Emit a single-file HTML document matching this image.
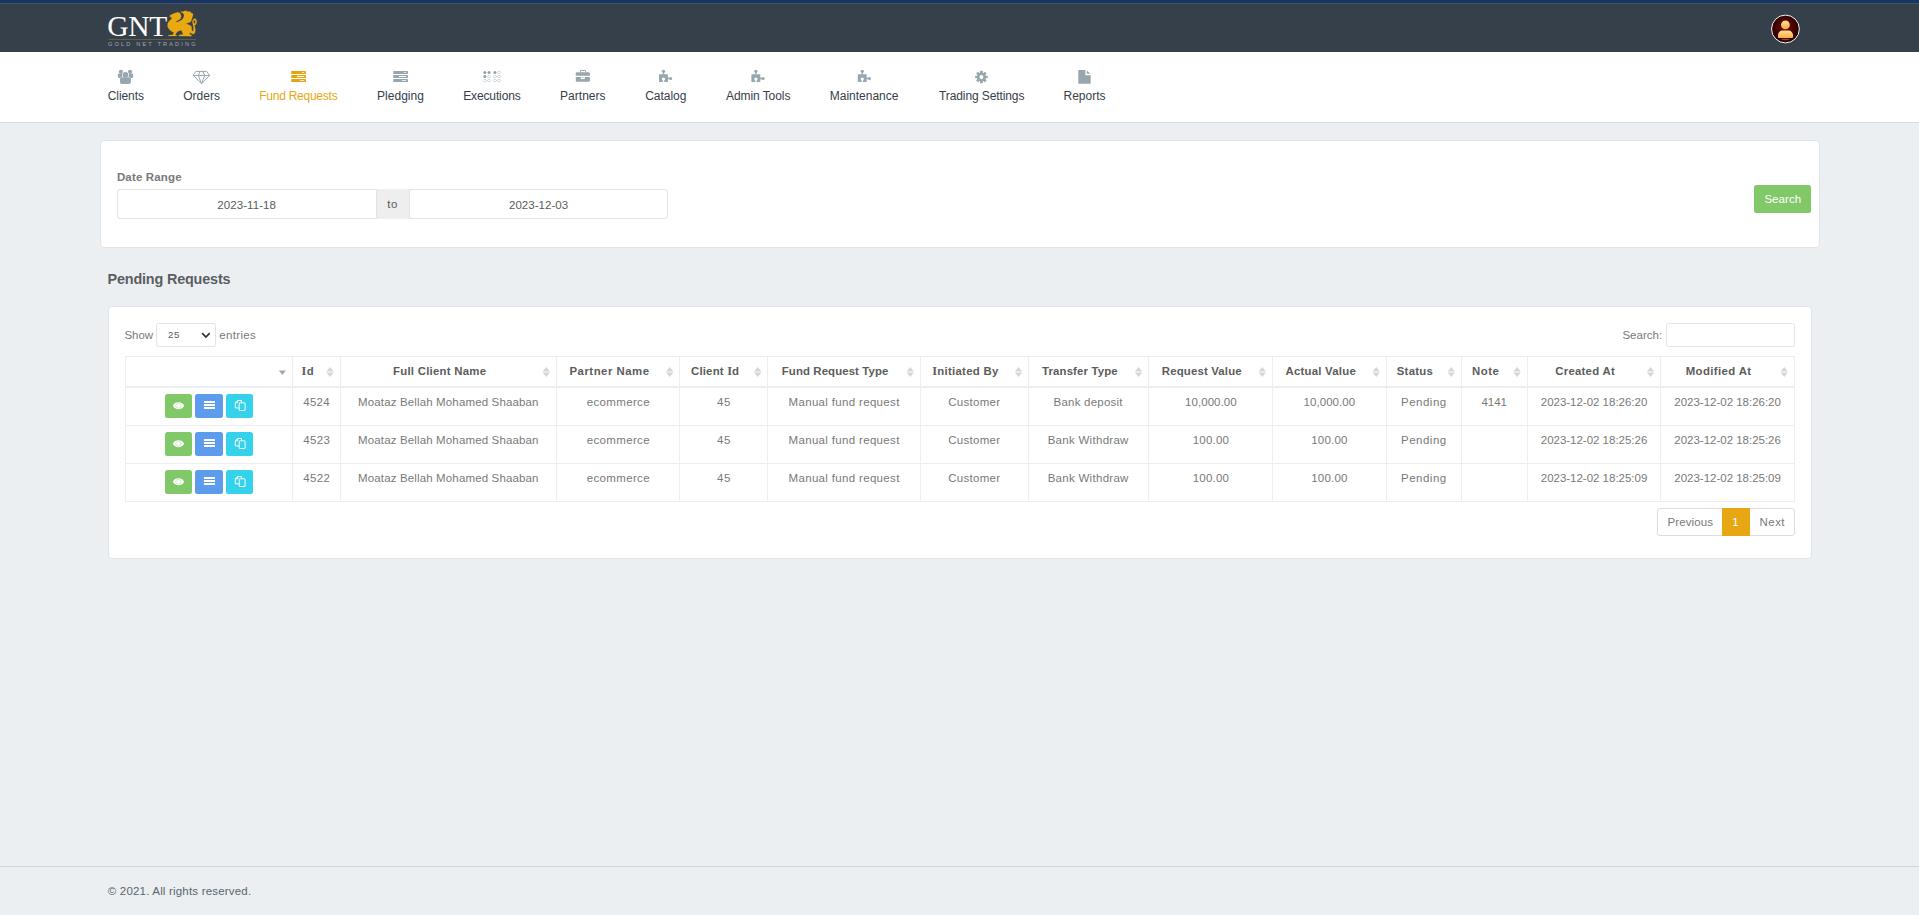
<!DOCTYPE html>
<html lang="en"><head><meta charset="utf-8"><title>Fund Requests</title>
<style>
*{box-sizing:border-box;margin:0;padding:0}
html,body{width:1919px;height:915px;overflow:hidden}
body{background:#ebeff2;font-family:"Liberation Sans",sans-serif;position:relative;color:#797979}
.a{position:absolute}
.t{position:absolute;white-space:nowrap;line-height:20px;font-family:"Liberation Sans",sans-serif}
.strip{left:0;top:0;width:1919px;height:4px;background:#19355e;border-bottom:1px solid #3b5276}
.topbar{left:0;top:4px;width:1919px;height:48px;background:#36404a}
.nav{left:0;top:52px;width:1919px;height:71px;background:#fff;border-bottom:1px solid #d6dade}
.card{background:#fff;border:1px solid #e0e4e9;border-radius:4px}
.inp{background:#fff;border:1px solid #e3e3e3}
.vl{position:absolute;width:1px;background:#ebeff2;top:356px;height:146px}
.hl{position:absolute;left:125px;width:1670px;height:1px;background:#ebeff2}
.btn{position:absolute;height:24px;border-radius:3px}
svg{position:absolute;overflow:visible}
</style></head><body>
<div class="a strip"></div>
<div class="a topbar"></div>
<div class="a nav"></div>
<!-- filter card -->
<div class="a card" style="left:100px;top:140px;width:1720px;height:108px"></div>
<div class="a inp" style="left:117px;top:189px;width:260px;height:30px;border-radius:3px 0 0 3px"></div>
<div class="a" style="left:377px;top:189px;width:32px;height:30px;background:#eeeeee;border-top:1px solid #eeeeee;border-bottom:1px solid #eeeeee"></div>
<div class="a inp" style="left:409px;top:189px;width:259px;height:30px;border-radius:0 3px 3px 0"></div>
<div class="a" style="left:1754px;top:185px;width:57px;height:28px;background:#81c868;border-radius:2.5px"></div>
<!-- table card -->
<div class="a card" style="left:108px;top:306px;width:1704px;height:253px"></div>
<div class="a inp" style="left:156px;top:323px;width:60px;height:24px;border-radius:2.5px"></div>
<div class="a inp" style="left:1666px;top:323px;width:129px;height:24px;border-radius:2.5px"></div>
<!-- table grid -->
<div class="hl" style="top:356px"></div>
<div class="hl" style="top:386px;height:2px"></div>
<div class="hl" style="top:425px"></div>
<div class="hl" style="top:463px"></div>
<div class="hl" style="top:501px"></div>
<div class="vl" style="left:125px"></div><div class="vl" style="left:292px"></div><div class="vl" style="left:340px"></div>
<div class="vl" style="left:556px"></div><div class="vl" style="left:679px"></div><div class="vl" style="left:767px"></div>
<div class="vl" style="left:920px"></div><div class="vl" style="left:1028px"></div><div class="vl" style="left:1148px"></div>
<div class="vl" style="left:1272px"></div><div class="vl" style="left:1386px"></div><div class="vl" style="left:1461px"></div>
<div class="vl" style="left:1527px"></div><div class="vl" style="left:1660px"></div><div class="vl" style="left:1794px"></div>
<!-- pagination -->
<div class="a" style="left:1657px;top:508px;width:138px;height:28px;background:#fff;border:1px solid #dddddd;border-radius:3px"></div>
<div class="a" style="left:1722px;top:508px;width:28px;height:28px;background:#e6a712"></div>
<!-- footer -->
<div class="a" style="left:0;top:866px;width:1919px;height:1px;background:#d4d7da"></div>

<svg width="1919" height="915" viewBox="0 0 1919 915" style="left:0;top:0">
<defs>
<radialGradient id="av" cx="50%" cy="45%" r="55%"><stop offset="0" stop-color="#7a0c02"/><stop offset="0.55" stop-color="#470400"/><stop offset="1" stop-color="#230100"/></radialGradient>
<linearGradient id="avg" x1="0" y1="0" x2="0" y2="1"><stop offset="0" stop-color="#ffe08f"/><stop offset="1" stop-color="#f5a94a"/></linearGradient>
</defs>
<path d="M169.20,16.29 L170.32,15.18 L172.54,13.88 L175.14,12.95 L177.74,12.32 L179.60,12.77 L180.53,14.07 L181.27,16.11 L180.90,17.97 L179.60,19.45 L177.37,20.75 L176.07,21.49 L176.82,22.24 L179.60,21.12 L182.20,19.45 L183.69,17.22 L184.06,14.99 L182.95,13.14 L180.34,11.84 L183.32,11.46 L185.92,10.54 L187.77,11.65 L189.63,11.28 L191.12,12.77 L193.16,13.88 L192.79,15.74 L192.23,17.59 L191.67,19.45 L190.93,21.68 L188.52,22.79 L185.92,23.83 L188.89,24.65 L191.41,26.32 L191.71,28.37 L191.86,30.78 L193.27,31.15 L193.49,27.25 L192.75,23.91 L192.31,21.31 L193.35,19.08 L195.20,18.52 L196.69,20.19 L196.69,22.79 L195.58,25.02 L194.27,25.21 L193.72,23.91 L195.02,23.17 L195.39,21.31 L194.65,20.01 L193.72,20.38 L193.61,22.05 L194.61,25.77 L195.39,29.48 L195.20,32.45 L193.53,34.24 L191.49,33.57 L190.00,32.45 L189.63,33.94 L191.86,35.54 L191.49,36.17 L178.86,36.06 L178.67,35.05 L183.32,34.31 L182.20,32.45 L181.46,30.22 L178.86,30.97 L177.00,32.08 L175.33,34.87 L176.82,35.42 L176.63,36.06 L168.27,36.06 L168.27,35.35 L172.92,34.87 L173.84,32.45 L171.43,31.34 L168.83,29.11 L167.53,26.51 L167.71,23.54 L169.20,20.94 L171.43,19.08 L171.99,17.78 L170.32,17.41 L171.06,16.67Z" fill="#e8a912" stroke="#e8a912" stroke-width="0.15" stroke-linejoin="round"/>
<rect x="108.5" y="39" width="87.5" height="1" fill="#665c40"/>
<circle cx="1785.45" cy="29" r="13.9" fill="url(#av)" stroke="#f4f4f4" stroke-width="1.0"/>
<circle cx="1785.4" cy="24.9" r="4.4" fill="url(#avg)"/>
<path d="M1778,37.2 v-2.2 a4.4,4.4 0 0 1 4.4,-4.4 h6.2 a4.4,4.4 0 0 1 4.4,4.4 v2.2 a0.8,0.8 0 0 1 -0.8,0.8 h-13.4 a0.8,0.8 0 0 1 -0.8,-0.8 z" fill="url(#avg)"/>
<ellipse cx="1785.4" cy="39.5" rx="4" ry="0.8" fill="#b86a10" opacity="0.7"/>
<g fill="#98a6ad"><circle cx="120.95" cy="71.85" r="2.1"/><circle cx="130.05" cy="71.85" r="2.1"/><rect x="117.85" y="73.6" width="4.6" height="4.3" rx="1.1"/><rect x="128.55" y="73.6" width="4.6" height="4.3" rx="1.1"/><circle cx="125.45" cy="74.8" r="3.15" fill="#fff"/><rect x="119.7" y="77.15" width="11.5" height="7.0" rx="2.1" fill="#fff"/><circle cx="125.45" cy="74.8" r="2.8"/><rect x="120.0" y="77.35" width="10.9" height="6.55" rx="1.9"/></g>
<g fill="none" stroke="#98a6ad" stroke-width="1.0" stroke-linejoin="round" stroke-linecap="round">
<path d="M196.34,71.41 L206.67,71.41 L209.68,75.50 L201.50,83.67 L193.33,75.50 Z"/>
<path d="M193.33,75.50 L209.68,75.50"/>
<path d="M199.94,71.41 L198.38,75.50 L201.50,83.67 L204.63,75.50 L203.07,71.41"/>
</g>
<g transform="translate(0,0)"><g fill="#e6a50e"><rect x="291.2" y="71.05" width="14.8" height="2.85" rx="0.4"/><rect x="291.2" y="75.1" width="14.8" height="2.85" rx="0.4"/><rect x="291.2" y="79.1" width="14.8" height="2.85" rx="0.4"/></g><g fill="#fff"><rect x="301.75" y="72.1" width="2.55" height="0.75" rx="0.35"/><rect x="296.8" y="76.1" width="7.5" height="0.8" rx="0.35"/><rect x="299.8" y="80.15" width="4.5" height="0.8" rx="0.35"/></g></g>
<g transform="translate(102,0)"><g fill="#98a6ad"><rect x="291.2" y="71.05" width="14.8" height="2.85" rx="0.4"/><rect x="291.2" y="75.1" width="14.8" height="2.85" rx="0.4"/><rect x="291.2" y="79.1" width="14.8" height="2.85" rx="0.4"/></g><g fill="#fff"><rect x="301.75" y="72.1" width="2.55" height="0.75" rx="0.35"/><rect x="296.8" y="76.1" width="7.5" height="0.8" rx="0.35"/><rect x="299.8" y="80.15" width="4.5" height="0.8" rx="0.35"/></g></g>
<circle cx="484.8" cy="72.44" r="1.5" fill="#93a2aa"/>
<circle cx="489.0" cy="72.44" r="1.5" fill="#93a2aa"/>
<circle cx="494.9" cy="72.44" r="1.5" fill="#93a2aa"/>
<ellipse cx="499.0" cy="72.44" rx="1.55" ry="1.15" fill="none" stroke="#c3ccd1" stroke-width="0.7"/>
<rect x="486.1" y="72.14" width="1.6" height="0.6" fill="#ccd3d8"/>
<rect x="496.2" y="72.14" width="1.6" height="0.6" fill="#ccd3d8"/>
<circle cx="484.8" cy="76.5" r="1.5" fill="#93a2aa"/>
<ellipse cx="489.0" cy="76.5" rx="1.55" ry="1.15" fill="none" stroke="#c3ccd1" stroke-width="0.7"/>
<ellipse cx="494.9" cy="76.5" rx="1.55" ry="1.15" fill="none" stroke="#c3ccd1" stroke-width="0.7"/>
<ellipse cx="499.0" cy="76.5" rx="1.55" ry="1.15" fill="none" stroke="#c3ccd1" stroke-width="0.7"/>
<rect x="486.1" y="76.2" width="1.6" height="0.6" fill="#ccd3d8"/>
<rect x="496.2" y="76.2" width="1.6" height="0.6" fill="#ccd3d8"/>
<ellipse cx="484.8" cy="80.54" rx="1.55" ry="1.15" fill="none" stroke="#c3ccd1" stroke-width="0.7"/>
<ellipse cx="489.0" cy="80.54" rx="1.55" ry="1.15" fill="none" stroke="#c3ccd1" stroke-width="0.7"/>
<ellipse cx="494.9" cy="80.54" rx="1.55" ry="1.15" fill="none" stroke="#c3ccd1" stroke-width="0.7"/>
<ellipse cx="499.0" cy="80.54" rx="1.55" ry="1.15" fill="none" stroke="#c3ccd1" stroke-width="0.7"/>
<rect x="486.1" y="80.24000000000001" width="1.6" height="0.6" fill="#ccd3d8"/>
<rect x="496.2" y="80.24000000000001" width="1.6" height="0.6" fill="#ccd3d8"/>
<g fill="#98a6ad">
<path d="M575.8,75.85 v-2.6 a1,1 0 0 1 1,-1 h12.1 a1,1 0 0 1 1,1 v2.6 z"/>
<path d="M575.8,77.05 h14.1 v3.8 a1,1 0 0 1 -1,1 h-12.1 a1,1 0 0 1 -1,-1 z"/>
<path d="M580.4,72.4 v-1.4 a0.6,0.6 0 0 1 0.6,-0.6 h4 a0.6,0.6 0 0 1 0.6,0.6 v1.4" fill="none" stroke="#98a6ad" stroke-width="1"/>
<rect x="580.85" y="77.05" width="3.95" height="2.0" fill="#fff"/>
<rect x="582.0" y="77.2" width="1.7" height="0.6"/>
</g>
<g transform="translate(0,0)" fill="#98a6ad"><rect x="659.0" y="74.15" width="8.9" height="7.75" rx="0.3"/><circle cx="663.5" cy="71.3" r="1.6"/><rect x="662.8" y="72.3" width="1.4" height="2.2"/><circle cx="670.7" cy="78.45" r="1.5"/><rect x="667.5" y="77.6" width="2.4" height="1.7"/><circle cx="663.5" cy="79.1" r="1.65" fill="#fff"/><rect x="662.85" y="80.2" width="1.3" height="2" fill="#fff"/></g>
<g transform="translate(92.4,0)" fill="#98a6ad"><rect x="659.0" y="74.15" width="8.9" height="7.75" rx="0.3"/><circle cx="663.5" cy="71.3" r="1.6"/><rect x="662.8" y="72.3" width="1.4" height="2.2"/><circle cx="670.7" cy="78.45" r="1.5"/><rect x="667.5" y="77.6" width="2.4" height="1.7"/><circle cx="663.5" cy="79.1" r="1.65" fill="#fff"/><rect x="662.85" y="80.2" width="1.3" height="2" fill="#fff"/></g>
<g transform="translate(198.8,0)" fill="#98a6ad"><rect x="659.0" y="74.15" width="8.9" height="7.75" rx="0.3"/><circle cx="663.5" cy="71.3" r="1.6"/><rect x="662.8" y="72.3" width="1.4" height="2.2"/><circle cx="670.7" cy="78.45" r="1.5"/><rect x="667.5" y="77.6" width="2.4" height="1.7"/><circle cx="663.5" cy="79.1" r="1.65" fill="#fff"/><rect x="662.85" y="80.2" width="1.3" height="2" fill="#fff"/></g>
<g fill="#98a6ad"><circle cx="981.4" cy="77.0" r="4.5"/><rect x="980.05" y="70.8" width="2.7" height="3" rx="0.5" transform="rotate(0 981.4 77.0)"/><rect x="980.05" y="70.8" width="2.7" height="3" rx="0.5" transform="rotate(45 981.4 77.0)"/><rect x="980.05" y="70.8" width="2.7" height="3" rx="0.5" transform="rotate(90 981.4 77.0)"/><rect x="980.05" y="70.8" width="2.7" height="3" rx="0.5" transform="rotate(135 981.4 77.0)"/><rect x="980.05" y="70.8" width="2.7" height="3" rx="0.5" transform="rotate(180 981.4 77.0)"/><rect x="980.05" y="70.8" width="2.7" height="3" rx="0.5" transform="rotate(225 981.4 77.0)"/><rect x="980.05" y="70.8" width="2.7" height="3" rx="0.5" transform="rotate(270 981.4 77.0)"/><rect x="980.05" y="70.8" width="2.7" height="3" rx="0.5" transform="rotate(315 981.4 77.0)"/><circle cx="981.4" cy="77.0" r="2.0" fill="#fff"/></g>
<path d="M1078.3,70.1 H1085.4 V75.2 H1090.7 V83.8 H1078.3 Z" fill="#98a6ad"/>
<path d="M1086.8,70.6 L1090.4,73.8 H1086.8 Z" fill="#98a6ad"/>
<path d="M326.40,371.55 L330.05,367.0 L333.70,371.55 Z" fill="#d6d6d6"/><path d="M326.40,372.6 L330.05,377.1 L333.70,372.6 Z" fill="#d6d6d6"/>
<path d="M542.60,371.55 L546.25,367.0 L549.90,371.55 Z" fill="#d6d6d6"/><path d="M542.60,372.6 L546.25,377.1 L549.90,372.6 Z" fill="#d6d6d6"/>
<path d="M666.10,371.55 L669.75,367.0 L673.40,371.55 Z" fill="#d6d6d6"/><path d="M666.10,372.6 L669.75,377.1 L673.40,372.6 Z" fill="#d6d6d6"/>
<path d="M754.10,371.55 L757.75,367.0 L761.40,371.55 Z" fill="#d6d6d6"/><path d="M754.10,372.6 L757.75,377.1 L761.40,372.6 Z" fill="#d6d6d6"/>
<path d="M906.60,371.55 L910.25,367.0 L913.90,371.55 Z" fill="#d6d6d6"/><path d="M906.60,372.6 L910.25,377.1 L913.90,372.6 Z" fill="#d6d6d6"/>
<path d="M1014.90,371.55 L1018.55,367.0 L1022.20,371.55 Z" fill="#d6d6d6"/><path d="M1014.90,372.6 L1018.55,377.1 L1022.20,372.6 Z" fill="#d6d6d6"/>
<path d="M1134.90,371.55 L1138.55,367.0 L1142.20,371.55 Z" fill="#d6d6d6"/><path d="M1134.90,372.6 L1138.55,377.1 L1142.20,372.6 Z" fill="#d6d6d6"/>
<path d="M1258.60,371.55 L1262.25,367.0 L1265.90,371.55 Z" fill="#d6d6d6"/><path d="M1258.60,372.6 L1262.25,377.1 L1265.90,372.6 Z" fill="#d6d6d6"/>
<path d="M1372.60,371.55 L1376.25,367.0 L1379.90,371.55 Z" fill="#d6d6d6"/><path d="M1372.60,372.6 L1376.25,377.1 L1379.90,372.6 Z" fill="#d6d6d6"/>
<path d="M1447.60,371.55 L1451.25,367.0 L1454.90,371.55 Z" fill="#d6d6d6"/><path d="M1447.60,372.6 L1451.25,377.1 L1454.90,372.6 Z" fill="#d6d6d6"/>
<path d="M1513.40,371.55 L1517.05,367.0 L1520.70,371.55 Z" fill="#d6d6d6"/><path d="M1513.40,372.6 L1517.05,377.1 L1520.70,372.6 Z" fill="#d6d6d6"/>
<path d="M1646.90,371.55 L1650.55,367.0 L1654.20,371.55 Z" fill="#d6d6d6"/><path d="M1646.90,372.6 L1650.55,377.1 L1654.20,372.6 Z" fill="#d6d6d6"/>
<path d="M1780.60,371.55 L1784.25,367.0 L1787.90,371.55 Z" fill="#d6d6d6"/><path d="M1780.60,372.6 L1784.25,377.1 L1787.90,372.6 Z" fill="#d6d6d6"/>
<path d="M278.8,370.5 L285.9,370.5 L282.35,374.9 Z" fill="#a6a6a6"/>
<path d="M202.1,333.2 L205.9,337.0 L209.7,333.2" fill="none" stroke="#333" stroke-width="1.7"/>
<rect x="165" y="394" width="27" height="24" rx="2.5" fill="#81c868"/>
<rect x="195" y="394" width="28" height="24" rx="2.5" fill="#5d9cec"/>
<rect x="226" y="394" width="27" height="24" rx="2.5" fill="#34d3eb"/>
<path d="M172.9,405.7 C174.5,401.09999999999997 182.5,401.09999999999997 184.1,405.7 C182.5,410.3 174.5,410.3 172.9,405.7 Z" fill="#fff"/>
<circle cx="178.5" cy="405.7" r="2.55" fill="none" stroke="#b4dea4" stroke-width="0.6"/>
<rect x="203.9" y="401.00" width="11.1" height="2.1" rx="0.3" fill="#fff"/>
<rect x="203.9" y="404.00" width="11.1" height="2.1" rx="0.3" fill="#fff"/>
<rect x="203.9" y="407.00" width="11.1" height="2.1" rx="0.3" fill="#fff"/>
<g fill="none" stroke="#fff" stroke-width="0.95" stroke-linejoin="round"><path d="M239.2,407.9 h-3.9 v-5.2 l2.2,-2.2 h4.0 v2.3"/><path d="M237.6,400.6 v2.2 h-2.2"/><rect x="239.2" y="402.8" width="5.9" height="7.7" rx="0.5"/></g>
<rect x="165" y="432" width="27" height="24" rx="2.5" fill="#81c868"/>
<rect x="195" y="432" width="28" height="24" rx="2.5" fill="#5d9cec"/>
<rect x="226" y="432" width="27" height="24" rx="2.5" fill="#34d3eb"/>
<path d="M172.9,443.7 C174.5,439.09999999999997 182.5,439.09999999999997 184.1,443.7 C182.5,448.3 174.5,448.3 172.9,443.7 Z" fill="#fff"/>
<circle cx="178.5" cy="443.7" r="2.55" fill="none" stroke="#b4dea4" stroke-width="0.6"/>
<rect x="203.9" y="439.00" width="11.1" height="2.1" rx="0.3" fill="#fff"/>
<rect x="203.9" y="442.00" width="11.1" height="2.1" rx="0.3" fill="#fff"/>
<rect x="203.9" y="445.00" width="11.1" height="2.1" rx="0.3" fill="#fff"/>
<g fill="none" stroke="#fff" stroke-width="0.95" stroke-linejoin="round"><path d="M239.2,445.9 h-3.9 v-5.2 l2.2,-2.2 h4.0 v2.3"/><path d="M237.6,438.6 v2.2 h-2.2"/><rect x="239.2" y="440.8" width="5.9" height="7.7" rx="0.5"/></g>
<rect x="165" y="470" width="27" height="24" rx="2.5" fill="#81c868"/>
<rect x="195" y="470" width="28" height="24" rx="2.5" fill="#5d9cec"/>
<rect x="226" y="470" width="27" height="24" rx="2.5" fill="#34d3eb"/>
<path d="M172.9,481.7 C174.5,477.09999999999997 182.5,477.09999999999997 184.1,481.7 C182.5,486.3 174.5,486.3 172.9,481.7 Z" fill="#fff"/>
<circle cx="178.5" cy="481.7" r="2.55" fill="none" stroke="#b4dea4" stroke-width="0.6"/>
<rect x="203.9" y="477.00" width="11.1" height="2.1" rx="0.3" fill="#fff"/>
<rect x="203.9" y="480.00" width="11.1" height="2.1" rx="0.3" fill="#fff"/>
<rect x="203.9" y="483.00" width="11.1" height="2.1" rx="0.3" fill="#fff"/>
<g fill="none" stroke="#fff" stroke-width="0.95" stroke-linejoin="round"><path d="M239.2,483.9 h-3.9 v-5.2 l2.2,-2.2 h4.0 v2.3"/><path d="M237.6,476.6 v2.2 h-2.2"/><rect x="239.2" y="478.8" width="5.9" height="7.7" rx="0.5"/></g>
</svg>
<span class="t" style="left:107.3px;top:0;font-family:'Liberation Serif',serif;font-size:29.5px;line-height:29.5px;color:#fff;top:12.3px;letter-spacing:-0.3px">GNT</span>
<span class="t" style="left:108px;top:40.2px;font-size:5.6px;line-height:8px;color:#a3a9b0;letter-spacing:2.16px;font-weight:400">GOLD NET TRADING</span>
<span class="t" style="left:107.75px;top:85.84px;font-size:12px;color:#36404a;letter-spacing:-0.083px;">Clients</span>
<span class="t" style="left:183.25px;top:85.84px;font-size:12px;color:#36404a;">Orders</span>
<span class="t" style="left:377.00px;top:85.84px;font-size:12px;color:#36404a;letter-spacing:0.036px;">Pledging</span>
<span class="t" style="left:463.25px;top:85.84px;font-size:12px;color:#36404a;letter-spacing:-0.139px;">Executions</span>
<span class="t" style="left:560.00px;top:85.84px;font-size:12px;color:#36404a;letter-spacing:0.036px;">Partners</span>
<span class="t" style="left:645.25px;top:85.84px;font-size:12px;color:#36404a;letter-spacing:-0.042px;">Catalog</span>
<span class="t" style="left:726.00px;top:85.84px;font-size:12px;color:#36404a;letter-spacing:-0.075px;">Admin Tools</span>
<span class="t" style="left:829.75px;top:85.84px;font-size:12px;color:#36404a;">Maintenance</span>
<span class="t" style="left:939.00px;top:85.84px;font-size:12px;color:#36404a;letter-spacing:-0.100px;">Trading Settings</span>
<span class="t" style="left:1063.50px;top:85.84px;font-size:12px;color:#36404a;">Reports</span>
<span class="t" style="left:259.25px;top:85.84px;font-size:12px;color:#e6a712;letter-spacing:-0.250px;">Fund Requests</span>
<span class="t" style="left:116.92px;top:167.22px;font-size:11.5px;color:#797979;letter-spacing:0.153px;font-weight:700;">Date Range</span>
<span class="t" style="left:217.20px;top:195.02px;font-size:11.5px;color:#5a5a5a;letter-spacing:0.089px;">2023-11-18</span>
<span class="t" style="left:387.35px;top:194.32px;font-size:11.5px;color:#5a5a5a;letter-spacing:0.500px;">to</span>
<span class="t" style="left:509.00px;top:195.02px;font-size:11.5px;color:#5a5a5a;letter-spacing:0.028px;">2023-12-03</span>
<span class="t" style="left:1764.40px;top:189.22px;font-size:11.5px;color:#ffffff;letter-spacing:0.050px;">Search</span>
<span class="t" style="left:107.50px;top:268.76px;font-size:14.4px;color:#5a5e63;letter-spacing:-0.167px;font-weight:700;">Pending Requests</span>
<span class="t" style="left:124.50px;top:325.02px;font-size:11.5px;color:#797979;letter-spacing:-0.050px;">Show</span>
<span class="t" style="left:168.00px;top:324.70px;font-size:9.8px;color:#5a5a5a;letter-spacing:0.500px;">25</span>
<span class="t" style="left:219.25px;top:325.02px;font-size:11.5px;color:#797979;letter-spacing:0.333px;">entries</span>
<span class="t" style="left:1622.40px;top:325.12px;font-size:11.5px;color:#797979;letter-spacing:0.017px;">Search:</span>
<span class="t" style="left:301.38px;top:360.85px;font-size:11.4px;color:#5c5c5c;letter-spacing:0.500px;font-weight:700;"><span style="font-family:'Liberation Serif',serif;font-size:108%;line-height:1">I</span>d</span>
<span class="t" style="left:393.00px;top:360.85px;font-size:11.4px;color:#5c5c5c;letter-spacing:0.250px;font-weight:700;">Full Client Name</span>
<span class="t" style="left:569.50px;top:360.85px;font-size:11.4px;color:#5c5c5c;letter-spacing:0.500px;font-weight:700;">Partner Name</span>
<span class="t" style="left:691.00px;top:360.85px;font-size:11.4px;color:#5c5c5c;letter-spacing:0.188px;font-weight:700;">Client <span style="font-family:'Liberation Serif',serif;font-size:108%;line-height:1">I</span>d</span>
<span class="t" style="left:781.75px;top:360.85px;font-size:11.4px;color:#5c5c5c;letter-spacing:0.109px;font-weight:700;">Fund Request Type</span>
<span class="t" style="left:932.25px;top:360.85px;font-size:11.4px;color:#5c5c5c;letter-spacing:0.273px;font-weight:700;"><span style="font-family:'Liberation Serif',serif;font-size:108%;line-height:1">I</span>nitiated By</span>
<span class="t" style="left:1042.00px;top:360.85px;font-size:11.4px;color:#5c5c5c;letter-spacing:0.146px;font-weight:700;">Transfer Type</span>
<span class="t" style="left:1161.75px;top:360.85px;font-size:11.4px;color:#5c5c5c;letter-spacing:0.167px;font-weight:700;">Request Value</span>
<span class="t" style="left:1285.50px;top:360.85px;font-size:11.4px;color:#5c5c5c;letter-spacing:0.227px;font-weight:700;">Actual Value</span>
<span class="t" style="left:1396.75px;top:360.85px;font-size:11.4px;color:#5c5c5c;letter-spacing:0.250px;font-weight:700;">Status</span>
<span class="t" style="left:1472.00px;top:360.85px;font-size:11.4px;color:#5c5c5c;letter-spacing:0.500px;font-weight:700;">Note</span>
<span class="t" style="left:1555.25px;top:360.85px;font-size:11.4px;color:#5c5c5c;letter-spacing:0.250px;font-weight:700;">Created At</span>
<span class="t" style="left:1685.75px;top:360.85px;font-size:11.4px;color:#5c5c5c;letter-spacing:0.375px;font-weight:700;">Modified At</span>
<span class="t" style="left:303.27px;top:392.22px;font-size:11.5px;color:#797979;letter-spacing:0.250px;">4524</span>
<span class="t" style="left:358.02px;top:392.22px;font-size:11.5px;color:#797979;letter-spacing:0.143px;">Moataz Bellah Mohamed Shaaban</span>
<span class="t" style="left:586.73px;top:392.22px;font-size:11.5px;color:#797979;letter-spacing:0.344px;">ecommerce</span>
<span class="t" style="left:717.00px;top:392.22px;font-size:11.5px;color:#797979;letter-spacing:0.500px;">45</span>
<span class="t" style="left:788.52px;top:392.22px;font-size:11.5px;color:#797979;letter-spacing:0.333px;">Manual fund request</span>
<span class="t" style="left:948.27px;top:392.22px;font-size:11.5px;color:#797979;letter-spacing:0.286px;">Customer</span>
<span class="t" style="left:1053.50px;top:392.22px;font-size:11.5px;color:#797979;letter-spacing:0.227px;">Bank deposit</span>
<span class="t" style="left:1185.00px;top:392.22px;font-size:11.5px;color:#797979;letter-spacing:0.062px;">10,000.00</span>
<span class="t" style="left:1303.50px;top:392.22px;font-size:11.5px;color:#797979;letter-spacing:0.062px;">10,000.00</span>
<span class="t" style="left:1401.00px;top:392.22px;font-size:11.5px;color:#797979;letter-spacing:0.500px;">Pending</span>
<span class="t" style="left:1481.50px;top:392.22px;font-size:11.5px;color:#797979;letter-spacing:-0.083px;">4141</span>
<span class="t" style="left:1540.75px;top:392.22px;font-size:11.5px;color:#797979;letter-spacing:-0.014px;">2023-12-02 18:26:20</span>
<span class="t" style="left:1674.35px;top:392.22px;font-size:11.5px;color:#797979;letter-spacing:-0.014px;">2023-12-02 18:26:20</span>
<span class="t" style="left:303.27px;top:430.22px;font-size:11.5px;color:#797979;letter-spacing:0.333px;">4523</span>
<span class="t" style="left:358.02px;top:430.22px;font-size:11.5px;color:#797979;letter-spacing:0.143px;">Moataz Bellah Mohamed Shaaban</span>
<span class="t" style="left:586.73px;top:430.22px;font-size:11.5px;color:#797979;letter-spacing:0.344px;">ecommerce</span>
<span class="t" style="left:717.00px;top:430.22px;font-size:11.5px;color:#797979;letter-spacing:0.500px;">45</span>
<span class="t" style="left:788.52px;top:430.22px;font-size:11.5px;color:#797979;letter-spacing:0.333px;">Manual fund request</span>
<span class="t" style="left:948.27px;top:430.22px;font-size:11.5px;color:#797979;letter-spacing:0.286px;">Customer</span>
<span class="t" style="left:1047.65px;top:430.22px;font-size:11.5px;color:#797979;letter-spacing:0.287px;">Bank Withdraw</span>
<span class="t" style="left:1192.75px;top:430.22px;font-size:11.5px;color:#797979;letter-spacing:0.200px;">100.00</span>
<span class="t" style="left:1311.25px;top:430.22px;font-size:11.5px;color:#797979;letter-spacing:0.200px;">100.00</span>
<span class="t" style="left:1401.00px;top:430.22px;font-size:11.5px;color:#797979;letter-spacing:0.500px;">Pending</span>
<span class="t" style="left:1540.75px;top:430.22px;font-size:11.5px;color:#797979;letter-spacing:-0.014px;">2023-12-02 18:25:26</span>
<span class="t" style="left:1674.35px;top:430.22px;font-size:11.5px;color:#797979;letter-spacing:-0.014px;">2023-12-02 18:25:26</span>
<span class="t" style="left:303.27px;top:468.22px;font-size:11.5px;color:#797979;letter-spacing:0.333px;">4522</span>
<span class="t" style="left:358.02px;top:468.22px;font-size:11.5px;color:#797979;letter-spacing:0.143px;">Moataz Bellah Mohamed Shaaban</span>
<span class="t" style="left:586.73px;top:468.22px;font-size:11.5px;color:#797979;letter-spacing:0.344px;">ecommerce</span>
<span class="t" style="left:717.00px;top:468.22px;font-size:11.5px;color:#797979;letter-spacing:0.500px;">45</span>
<span class="t" style="left:788.52px;top:468.22px;font-size:11.5px;color:#797979;letter-spacing:0.333px;">Manual fund request</span>
<span class="t" style="left:948.27px;top:468.22px;font-size:11.5px;color:#797979;letter-spacing:0.286px;">Customer</span>
<span class="t" style="left:1047.65px;top:468.22px;font-size:11.5px;color:#797979;letter-spacing:0.287px;">Bank Withdraw</span>
<span class="t" style="left:1192.75px;top:468.22px;font-size:11.5px;color:#797979;letter-spacing:0.200px;">100.00</span>
<span class="t" style="left:1311.25px;top:468.22px;font-size:11.5px;color:#797979;letter-spacing:0.200px;">100.00</span>
<span class="t" style="left:1401.00px;top:468.22px;font-size:11.5px;color:#797979;letter-spacing:0.500px;">Pending</span>
<span class="t" style="left:1540.75px;top:468.22px;font-size:11.5px;color:#797979;letter-spacing:-0.014px;">2023-12-02 18:25:09</span>
<span class="t" style="left:1674.35px;top:468.22px;font-size:11.5px;color:#797979;letter-spacing:-0.014px;">2023-12-02 18:25:09</span>
<span class="t" style="left:1667.40px;top:512.02px;font-size:11.5px;color:#797979;letter-spacing:0.121px;">Previous</span>
<span class="t" style="left:1732.32px;top:512.02px;font-size:11.5px;color:#ffffff;">1</span>
<span class="t" style="left:1759.50px;top:512.02px;font-size:11.5px;color:#797979;letter-spacing:0.467px;">Next</span>
<span class="t" style="left:107.75px;top:880.92px;font-size:11.5px;color:#58666e;letter-spacing:0.189px;">© 2021. All rights reserved.</span>
</body></html>
